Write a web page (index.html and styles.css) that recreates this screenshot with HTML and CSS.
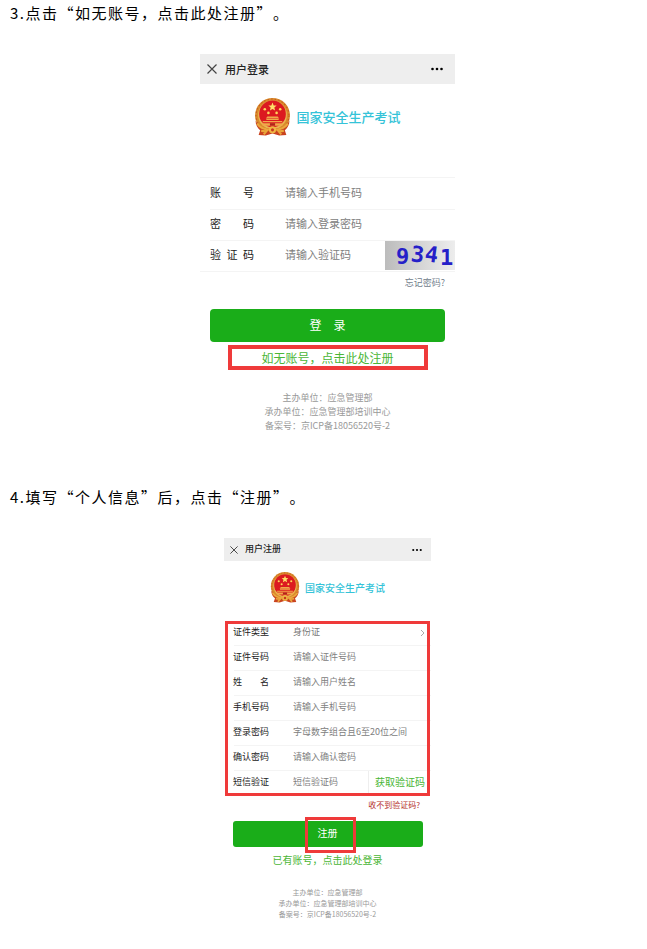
FILE: index.html
```
<!DOCTYPE html>
<html lang="zh-CN">
<head>
<meta charset="utf-8">
<meta name="viewport" content="width=device-width, initial-scale=1">
<title>国家安全生产考试</title>
<link rel="stylesheet" href="styles.css">
</head>
<body>
<svg class="defs" aria-hidden="true">
  <symbol id="emblem" viewBox="0 0 72 74">
    <circle cx="36" cy="34" r="34" fill="#d98a2b"/>
    <circle cx="36" cy="34" r="32" fill="none" stroke="#c65a22" stroke-width="2" stroke-dasharray="3 4"/>
    <circle cx="36" cy="33" r="28" fill="#e9b552"/>
    <circle cx="36" cy="31" r="26" fill="#dc1a20"/>
    <path fill="#ffe169" d="M36 9l2.300 5.400 5.700.4-4.400 3.800 1.400 5.700-5-3.100-5 3.100 1.400-5.700-4.400-3.800 5.700-.4z"/>
    <g fill="#ffd85a">
      <circle cx="21" cy="22" r="2.500"/><circle cx="51" cy="22" r="2.500"/>
      <circle cx="28" cy="29" r="2.500"/><circle cx="44" cy="29" r="2.500"/>
    </g>
    <path fill="#f0a94a" d="M26 36h20l3 4H23zM24 41h24v2H24zM17 45h38v2H17zM14 49h44l-3 5H17z"/>
    <path d="M31 49h10v5H31z" fill="#b3231b"/>
    <path d="M3 44c5 11 15 15 26 16l7-4 7 4c11-1 21-5 26-16 0 9-4 15-9 19l3 9-14 1-13-4-13 4-14-1 3-9C7 59 3 53 3 44z" fill="#c9431f"/>
    <path d="M6 50c5 7 14 11 23 12M66 50c-5 7-14 11-23 12M14 64l10 1-5 6M58 64l-10 1 5 6" fill="none" stroke="#eaa83c" stroke-width="4"/>
    <circle cx="36" cy="62" r="7" fill="#efb744"/>
    <circle cx="36" cy="62" r="3" fill="#c8381d"/>
  </symbol>
  <symbol id="close" viewBox="0 0 10 10">
    <path d="M.5.5l9 9M9.500.5l-9 9" fill="none" stroke="#444" stroke-width="1.200"/>
  </symbol>
  <symbol id="more" viewBox="0 0 12 4">
    <circle cx="1.500" cy="2" r="1.300"/><circle cx="6" cy="2" r="1.300"/><circle cx="10.500" cy="2" r="1.300"/>
  </symbol>
</svg>

<main class="guide">
  <p class="step">3.点击“如无账号，点击此处注册”。</p>

  <section class="phone login">
    <header class="bar">
      <button class="icon-btn" type="button" aria-label="关闭"><svg class="close"><use href="#close"/></svg></button>
      <span class="bar-title">用户登录</span>
      <button class="icon-btn" type="button" aria-label="更多"><svg class="more"><use href="#more"/></svg></button>
    </header>
    <div class="brand"><svg class="emblem"><use href="#emblem"/></svg><span>国家安全生产考试</span></div>
    <form>
      <div class="rows">
        <div class="row"><label for="account">账 号</label><input id="account" type="text" placeholder="请输入手机号码"></div>
        <div class="row"><label for="pwd">密 码</label><input id="pwd" type="password" placeholder="请输入登录密码"></div>
        <div class="row"><label for="code">验 证 码</label><input id="code" type="text" placeholder="请输入验证码">
          <svg class="captcha" viewBox="0 0 70 29">
            <defs><linearGradient id="shade"><stop offset="0" stop-color="#bcbcbc"/><stop offset="1" stop-color="#ededed"/></linearGradient></defs>
            <rect width="70" height="29" fill="url(#shade)"/>
            <text x="11" y="23">9</text>
            <text x="26" y="21" transform="rotate(6 32 14)">3</text>
            <text x="40" y="21" transform="rotate(8 46 14)">4</text>
            <text x="55" y="24">1</text>
          </svg>
        </div>
      </div>
      <div class="help"><a href="#">忘记密码?</a></div>
      <button class="submit" type="submit">登&emsp;录</button>
      <a class="switch marked" href="#">如无账号，点击此处注册</a>
    </form>
    <footer>主办单位：应急管理部<br>承办单位：应急管理部培训中心<br>备案号：京ICP备18056520号-2</footer>
  </section>

  <p class="step">4.填写“个人信息”后，点击“注册”。</p>

  <section class="phone register">
    <header class="bar">
      <button class="icon-btn" type="button" aria-label="关闭"><svg class="close"><use href="#close"/></svg></button>
      <span class="bar-title">用户注册</span>
      <button class="icon-btn" type="button" aria-label="更多"><svg class="more"><use href="#more"/></svg></button>
    </header>
    <div class="brand"><svg class="emblem"><use href="#emblem"/></svg><span>国家安全生产考试</span></div>
    <form>
      <div class="rows">
        <div class="row"><label for="idtype">证件类型</label><select id="idtype"><option>身份证</option></select>
          <svg class="chevron" viewBox="0 0 5 8"><path d="M1 1l3 3-3 3" fill="none" stroke="#aaa"/></svg></div>
        <div class="row"><label for="idno">证件号码</label><input id="idno" type="text" placeholder="请输入证件号码"></div>
        <div class="row"><label for="name">姓 名</label><input id="name" type="text" placeholder="请输入用户姓名"></div>
        <div class="row"><label for="phone">手机号码</label><input id="phone" type="tel" placeholder="请输入手机号码"></div>
        <div class="row"><label for="newpwd">登录密码</label><input id="newpwd" type="password" placeholder="字母数字组合且6至20位之间"></div>
        <div class="row"><label for="again">确认密码</label><input id="again" type="password" placeholder="请输入确认密码"></div>
        <div class="row"><label for="sms">短信验证</label><input id="sms" type="text" placeholder="短信验证码"><button class="get-code" type="button">获取验证码</button></div>
      </div>
      <div class="help"><a href="#">收不到验证码?</a></div>
      <button class="submit" type="submit">注册</button>
      <a class="switch" href="#">已有账号，点击此处登录</a>
    </form>
    <footer>主办单位：应急管理部<br>承办单位：应急管理部培训中心<br>备案号：京ICP备18056520号-2</footer>
  </section>
</main>
</body>
</html>
```
FILE: styles.css
```
* { box-sizing: border-box; }

body {
  margin: 0;
  background: #fff;
  color: #000;
  font-family: "Noto Sans CJK SC", "Noto Sans", sans-serif;
  text-spacing-trim: space-all;
}

.defs { position: absolute; width: 0; height: 0; }

.guide { padding: 0 2px 16px 10px; }

.step {
  margin: 0 0 29px;
  font-size: 15px;
  line-height: 25px;
  letter-spacing: 0.1em;
}

.phone { margin: 0 auto; }

.bar {
  display: flex;
  align-items: center;
  background: #eee;
}

.bar-title { flex: 1; font-weight: 500; color: #222; }

button, input, select {
  margin: 0;
  padding: 0;
  border: 0;
  background: none;
  font: inherit;
  color: inherit;
}

a { text-decoration: none; }

.icon-btn { display: flex; }

.brand {
  display: flex;
  justify-content: center;
  align-items: center;
  color: #35c3d8;
  font-weight: 500;
}

.rows { position: relative; }

.row {
  display: flex;
  align-items: center;
  position: relative;
}

.row + .row::before {
  content: "";
  position: absolute;
  top: 0;
  right: 0;
  left: 10px;
  border-top: 1px solid #f4f4f4;
}

.row label {
  flex: none;
  color: #222;
  text-align: justify;
  text-align-last: justify;
}

.row input, .row select { flex: 1; min-width: 0; color: #777; }
.row select { appearance: none; }
.row input::placeholder { color: #808080; opacity: 1; }

.help { display: flex; justify-content: flex-end; }

.submit {
  display: block;
  background: #1aad19;
  color: #fff;
}

.switch {
  display: block;
  color: #4ab636;
  text-align: center;
}

footer { color: #999; text-align: center; }

/* Login screen */

.login { width: 255px; margin-bottom: 51px; font-size: 11px; }
.login .bar { height: 30px; padding: 0 12px 0 7px; gap: 8px; }
.login .close { width: 10px; height: 10px; }
.login .more { width: 12px; height: 4px; }
.login .brand { height: 65px; gap: 5px; font-size: 13px; }
.login .emblem { width: 37px; height: 38px; }
.login .rows {
  margin-top: 28px;
  border-top: 1px solid #f4f4f4;
  border-bottom: 1px solid #f4f4f4;
}
.login .row { height: 31px; padding-left: 10px; }
.login .row label, .login .row input { padding-bottom: 4px; }
.login label { width: 44px; margin-right: 31px; }
.login .help { padding: 0 10px; font-size: 9px; line-height: 22px; }
.login .help a { color: #71808c; }
.login .submit {
  width: calc(100% - 20px);
  height: 33px;
  margin: 15px 10px 3px;
  padding-bottom: 3px;
  border-radius: 4px;
  font-size: 12px;
}
.login .switch { width: 200px; margin: 0 auto; font-size: 12px; line-height: 17px; }
.marked { border: 4px solid #ef3a3a; }
.login footer { margin-top: 21px; font-size: 9px; line-height: 14px; }

.captcha { width: 70px; height: 29px; }
.captcha text {
  fill: #2520c8;
  font: bold 22px "DejaVu Sans Mono", monospace;
}

/* Registration screen */

.register { width: 207px; font-size: 9px; }
.register .bar { height: 23px; padding: 0 9px 0 6px; gap: 7px; }
.register .bar-title { padding-bottom: 2px; }
.register .close { width: 8px; height: 8px; }
.register .more { width: 10px; height: 4px; }
.register .brand { height: 53px; gap: 5px; font-size: 10px; }
.register .emblem { width: 30px; height: 31px; }
.register .rows { margin-top: 6px; }
.register .rows::after {
  content: "";
  position: absolute;
  inset: 1px 1px -1px;
  border: 3px solid #ef3a3a;
  pointer-events: none;
}
.register .row { height: 25px; padding: 0 6px 0 9px; }
.register .row label, .register .row input, .register .row select { padding-bottom: 2px; }
.register label { width: 36px; margin-right: 24px; }
.chevron { width: 5px; height: 8px; }
.get-code {
  align-self: stretch;
  padding: 0 0 2px 6px;
  border-left: 1px solid #eee;
  color: #4ab636;
  font-size: 10px;
}
.register .help { padding: 0 11px; font-size: 8px; line-height: 20px; }
.register .help a { color: #b5302c; }
.register .submit {
  position: relative;
  width: calc(100% - 17px);
  height: 26px;
  margin: 6px auto 5px;
  padding-bottom: 3px;
  border-radius: 3px;
  font-size: 10px;
}
.register .submit::after {
  content: "";
  position: absolute;
  inset: -4px 67px -6px 72px;
  border: 3px solid #ef3a3a;
}
.register .switch { font-size: 10px; line-height: 16px; }
.register footer { margin-top: 19px; font-size: 7px; line-height: 11px; }
```
